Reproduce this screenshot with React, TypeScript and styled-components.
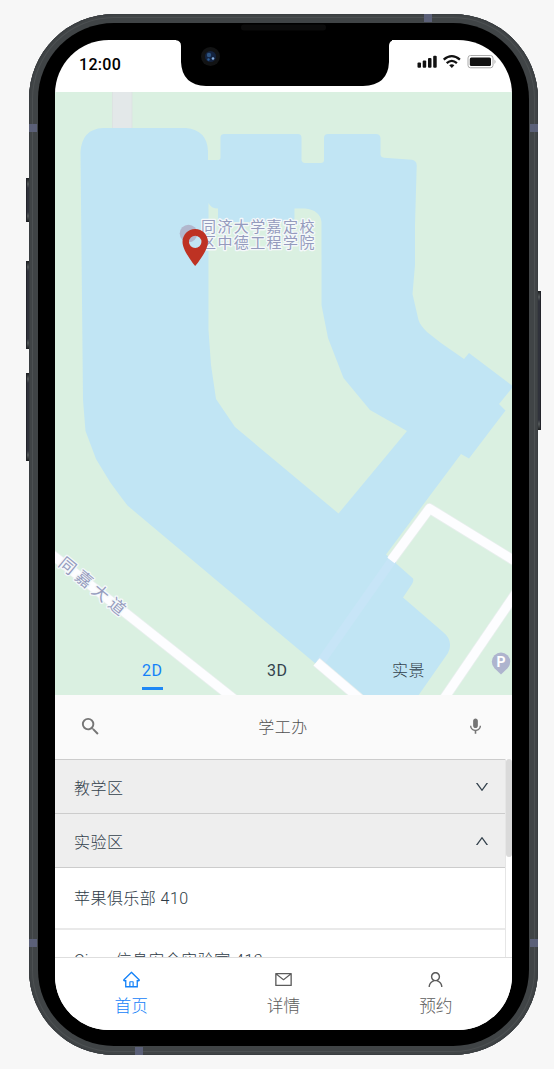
import React, { useState } from "react";
import styled, { createGlobalStyle } from "styled-components";
import { AiOutlineHome, AiOutlineMail, AiOutlineUser, AiOutlineDown, AiOutlineUp } from "react-icons/ai";
import { MdSearch, MdMic } from "react-icons/md";

const GlobalStyle = createGlobalStyle`
  * { box-sizing: border-box; }
  body {
    margin: 0;
    background: #f7f7f7;
    font-family: Roboto, "Noto Sans CJK SC", sans-serif;
    font-weight: 300;
    overflow: hidden;
  }
`;

const Stage = styled.main`
  width: 554px;
  height: 1069px;
  padding: 14px 0 0 29px;
`;

const Phone = styled.div`
  position: relative;
  width: 509px;
  height: 1041px;
  padding: 9px;
  border-radius: 85px;
  background: #404446;
  box-shadow: inset 0 0 0 1px #3a3e41, inset 0 0 0 3px #404446, inset 0 0 0 4px #4c5052;
`;

const SideButton = styled.span<{ $side: "left" | "right"; $top: number; $height: number }>`
  position: absolute;
  ${(p) => p.$side}: -3px;
  top: ${(p) => p.$top}px;
  width: 3px;
  height: ${(p) => p.$height}px;
  background: linear-gradient(#1a1c1e, #555a5b 6px, #30323b 10px, #30323b calc(100% - 10px), #555a5b calc(100% - 6px), #1a1c1e);
  border-${(p) => p.$side}: 1px solid #22242a;
`;

const Antenna = styled.span<{ $x: number; $y: number }>`
  position: absolute;
  left: ${(p) => p.$x}px;
  top: ${(p) => p.$y}px;
  width: 8px;
  height: 8px;
  background: #5b6078;
`;

const Bezel = styled.div`
  height: 100%;
  padding: 17px;
  border-radius: 76px;
  background: #000;
`;

const Screen = styled.div`
  position: relative;
  display: flex;
  flex-direction: column;
  width: 457px;
  height: 990px;
  border-radius: 54px;
  overflow: hidden;
  background: #fff;
`;

const Notch = styled.svg`
  position: absolute;
  left: 147px;
  top: 9px;
`;

const StatusBar = styled.header`
  display: flex;
  flex: none;
  justify-content: space-between;
  height: 52px;
  padding: 14px 16px 0 24px;
`;

const Clock = styled.time`
  font-size: 16px;
  line-height: 21px;
  font-weight: 500;
  letter-spacing: 0.3px;
  color: #000;
`;

const MapArea = styled.section`
  position: relative;
  flex: none;
  height: 603px;
`;

const MapCanvas = styled.svg`
  display: block;
`;

const ViewTabs = styled.nav`
  position: absolute;
  left: 0;
  right: 0;
  bottom: 5px;
  display: flex;
  justify-content: space-between;
  padding: 0 87px;
`;

const ViewTab = styled.button<{ $active: boolean; $light: boolean }>`
  height: 30px;
  padding: 0 0 5px;
  border: 0;
  border-bottom: 3px solid ${(p) => (p.$active ? "#1e88f5" : "transparent")};
  background: none;
  font: inherit;
  font-weight: ${(p) => (p.$light ? 300 : 400)};
  font-size: 16px;
  line-height: 22px;
  letter-spacing: 0.5px;
  color: ${(p) => (p.$active ? "#1482f8" : "#33424d")};
`;

const SearchBar = styled.div`
  display: flex;
  flex: none;
  align-items: center;
  justify-content: space-between;
  height: 64px;
  padding: 0 27px 2px 24px;
  background: #fafafa;
  color: #757575;
`;

const SearchText = styled.span`
  margin-left: -2px;
  font-size: 16px;
  letter-spacing: 0.5px;
  color: #505050;
`;

const ListArea = styled.section`
  display: flex;
  flex: none;
  height: 198px;
  overflow: hidden;
`;

const List = styled.div`
  flex: 1;
  border-right: 1px solid #e6e6e6;
`;

const GroupRow = styled.div`
  display: flex;
  align-items: center;
  justify-content: space-between;
  height: 54px;
  padding: 0 15px 0 19px;
  border-top: 1px solid #ccc;
  background: #eee;
  font-size: 16px;
  letter-spacing: 0.5px;
  color: #33414c;
`;

const ItemRow = styled.div<{ $first?: boolean }>`
  height: 61px;
  padding: 0 19px;
  border-top: ${(p) => (p.$first ? "1px solid #ccc" : "2px solid #e9e9e9")};
  font-size: 16px;
  line-height: 61px;
  letter-spacing: 0.45px;
  color: #2c3a45;
`;

const ScrollTrack = styled.div`
  width: 6px;
`;

const ScrollThumb = styled.div`
  height: 98px;
  border-radius: 3px;
  background: #dadada;
`;

const BottomNav = styled.nav`
  display: flex;
  flex: 1;
  border-top: 1px solid #dedede;
  background: #fff;
`;

const NavItem = styled.a<{ $active?: boolean }>`
  flex: 1;
  display: flex;
  flex-direction: column;
  align-items: center;
  gap: 6px;
  padding-top: 12px;
  font-size: 16.7px;
  line-height: 24px;
  color: ${(p) => (p.$active ? "#1482f8" : "#5c5c5c")};
`;

function NotchShape() {
  return (
    <Notch width="216" height="64" viewBox="176 23 216 64">
      <path d="M175 39H395V40.3Q389 40.3 389 46V62Q388 85.5 363 86H206Q182 85 181 62V46Q181 40.3 175 40.3Z" />
      <rect x="241" y="24.500" width="85" height="6" rx="3" fill="#0b0b0b" />
      <circle cx="210.500" cy="56.500" r="9.500" fill="#121314" />
      <circle cx="210.500" cy="56.500" r="5.500" fill="#14233f" />
      <circle cx="209" cy="55" r="2.200" fill="#2e5482" />
      <circle cx="213" cy="58.500" r="1.300" fill="#86aede" />
      <circle cx="208.500" cy="59.500" r="1.200" fill="#2d5f99" />
    </Notch>
  );
}

function StatusIcons() {
  return (
    <svg width="80" height="16" viewBox="416 54 80 16">
      <g fill="#111">
        <rect x="417.500" y="62.500" width="3.500" height="5.200" rx="1" />
        <rect x="422.700" y="60.500" width="3.500" height="7.200" rx="1" />
        <rect x="428" y="58" width="3.500" height="9.700" rx="1" />
        <rect x="433.200" y="55.800" width="3.500" height="11.900" rx="1" />
        <rect x="469.800" y="57.500" width="21.200" height="8.600" rx="1.500" />
        <path d="M451.800 68L449.200 65.300Q451.800 63.300 454.400 65.300Z" />
      </g>
      <g fill="none" stroke="#111" strokeWidth="2.300">
        <path d="M443.700 59.600Q451.800 52.700 459.900 59.600" />
        <path d="M446.700 63.100Q451.800 58.600 456.900 63.100" />
      </g>
      <rect x="468" y="55.500" width="25" height="12.300" rx="2.500" fill="none" stroke="#aaa" />
      <path d="M494.500 59.500Q496.500 61.700 494.500 64Z" fill="#aaa" />
    </svg>
  );
}

function CampusMap() {
  return (
    <MapCanvas width="457" height="603" viewBox="55 92 457 603">
      <rect x="55" y="92" width="457" height="603" fill="#daf0e1" />
      <rect x="112.500" y="90" width="19.500" height="40" fill="#e3e8e9" stroke="#dce0e1" strokeWidth=".8" />
      <path
        fill="#c1e5f4"
        fillRule="evenodd"
        d="M80.500 152Q82 129 103 128H186Q207 130 208 151V160H218Q220.500 160 220.500 158V137Q221 134 224 134H298Q301.500 134 301.500 138V160Q302 163 305 163H321Q324 163 324 160V138Q324 134 328 134H376Q380 134 380.500 138V155Q381 157.500 384 157.800L412 159.800Q417 161 416.700 166L415 225V265L412.500 294L418.500 320Q420 325 427 332L441 343L464 359L469 353L512 385.500V388L499 404L505.500 410.500L469 458.500L461 454L386 554.500L413 578.500Q414 581 412 584L403 597.500L443 632Q454 641 448 653L418 696H356L316 664L128 506Q126 504 110 482L96 459L85.500 431L83 400L82 300Z
        M208.500 203Q211 208.500 218 208.500V222H294V208.500H305Q320 210 321.500 222V305L328 338L343.500 378L370 410L407 431L338.500 513.500L235 427L216 399L211 365L208.500 330Z"
      />
      <rect x="218" y="208" width="76.500" height="11.500" fill="#c1e5f4" />
      <path d="M393 559L320 663" stroke="#c7e5f7" strokeWidth="9" />
      <g fill="none" stroke="#e9efee" strokeWidth="10.500" strokeLinejoin="round">
        <path d="M50 553L234 699" />
        <path d="M392 559.500L429.500 508.500L518 563" />
        <path d="M316.500 662L360 699" />
        <path d="M441 703L518 590" />
      </g>
      <g fill="none" stroke="#fdfdff" strokeWidth="9" strokeLinejoin="round">
        <path d="M50 553L234 699" />
        <path d="M391 560.500L429.500 508.500L518 563" />
        <path d="M316.500 662L360 699" />
        <path d="M441 703L518 590" />
      </g>
      <circle cx="188.500" cy="233.500" r="8.800" fill="#b1b7cd" />
      <g
        fill="#959bbd"
        stroke="#f4f8fa"
        strokeWidth="2.600"
        strokeLinejoin="round"
        paintOrder="stroke"
        fontFamily="'Noto Sans CJK SC', sans-serif"
        fontWeight="400"
        fontSize="15"
      >
        <text x="201" y="231.800" letterSpacing="1.400">同济大学嘉定校</text>
        <text x="201" y="248.300" letterSpacing="1.400">区中德工程学院</text>
        <text transform="translate(57.500 565) rotate(39.500)" fontSize="16.500" letterSpacing="4.900">同嘉大道</text>
      </g>
      <path
        fill="#be3223"
        fillRule="evenodd"
        d="M195.200 229C188 229 182.500 234.800 182.500 242C182.500 251 195.200 266 195.200 266S208 251 208 242C208 234.800 202.400 229 195.200 229ZM195.200 235.700A6.200 6.200 0 1 1 195.200 248.100A6.200 6.200 0 1 1 195.200 235.700Z"
      />
      <path d="M501 674.500L494.500 668.300A9.200 9.200 0 1 1 507.500 668.300Z" fill="#aeb4ce" />
      <text x="501" y="666.500" textAnchor="middle" fontFamily="Roboto, sans-serif" fontWeight="700" fontSize="14" fill="#fff">P</text>
    </MapCanvas>
  );
}

const views = ["2D", "3D", "实景"];

export default function App() {
  const [view, setView] = useState("2D");
  return (
    <Stage>
      <GlobalStyle />
      <Phone>
        <SideButton $side="left" $top={164} $height={44} />
        <SideButton $side="left" $top={247} $height={88} />
        <SideButton $side="left" $top={359} $height={88} />
        <SideButton $side="right" $top={277} $height={139} />
        <Antenna $x={395} $y={0} />
        <Antenna $x={0} $y={110} />
        <Antenna $x={501} $y={110} />
        <Antenna $x={0} $y={925} />
        <Antenna $x={501} $y={925} />
        <Antenna $x={106} $y={1033} />
        <Bezel>
          <Screen>
            <StatusBar>
              <Clock>12:00</Clock>
              <StatusIcons />
            </StatusBar>
            <MapArea>
              <CampusMap />
              <ViewTabs>
                {views.map((v) => (
                  <ViewTab key={v} $active={v === view} $light={v === "实景"} onClick={() => setView(v)}>
                    {v}
                  </ViewTab>
                ))}
              </ViewTabs>
            </MapArea>
            <SearchBar>
              <MdSearch size={23} />
              <SearchText>学工办</SearchText>
              <MdMic size={19} />
            </SearchBar>
            <ListArea>
              <List>
                <GroupRow>
                  教学区
                  <AiOutlineDown size={16} />
                </GroupRow>
                <GroupRow>
                  实验区
                  <AiOutlineUp size={16} />
                </GroupRow>
                <ItemRow $first>苹果俱乐部 410</ItemRow>
                <ItemRow>Cisco信息安全实验室 413</ItemRow>
              </List>
              <ScrollTrack>
                <ScrollThumb />
              </ScrollTrack>
            </ListArea>
            <BottomNav>
              <NavItem $active>
                <AiOutlineHome size={19} />
                首页
              </NavItem>
              <NavItem>
                <AiOutlineMail size={19} />
                详情
              </NavItem>
              <NavItem>
                <AiOutlineUser size={19} />
                预约
              </NavItem>
            </BottomNav>
          </Screen>
        </Bezel>
        <NotchShape />
      </Phone>
    </Stage>
  );
}
